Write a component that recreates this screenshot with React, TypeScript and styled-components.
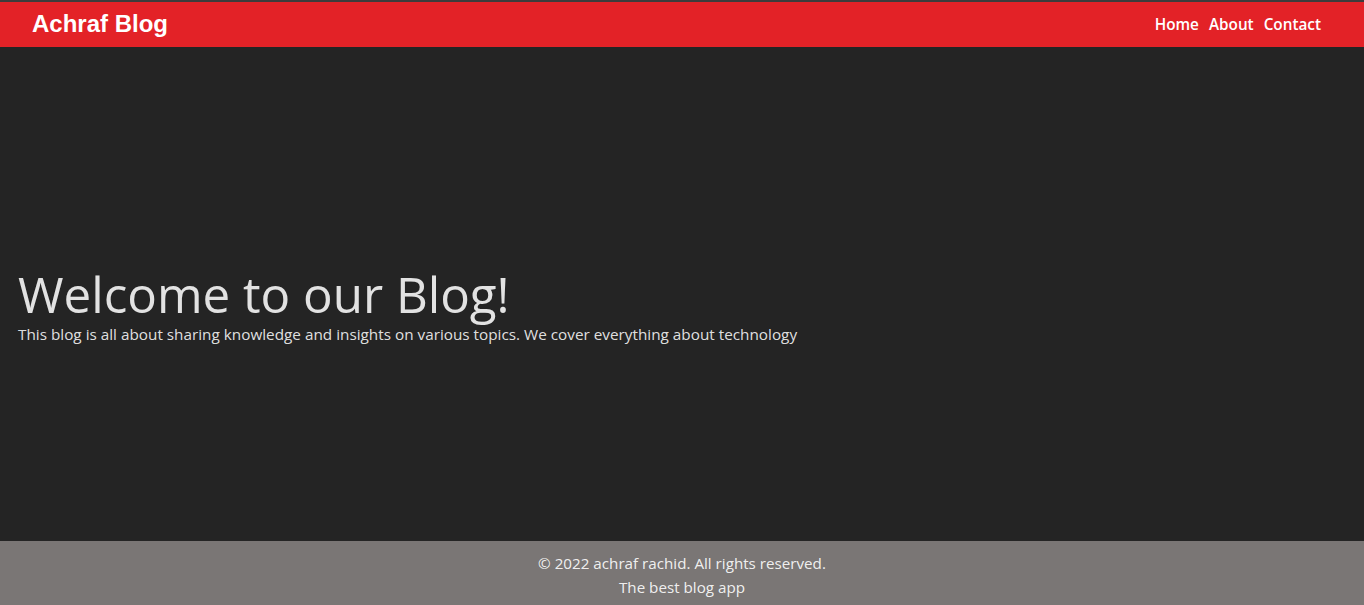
import React from "react";
import styled, { createGlobalStyle } from "styled-components";

const Global = createGlobalStyle`
  html, body { margin: 0; padding: 0; }
  body {
    background: #242424;
    color: rgba(255,255,255,0.87);
    font-family: "Open Sans", "Noto Sans", sans-serif;
  }
`;

const Page = styled.div`
  display: flex;
  flex-direction: column;
  height: 605px;
  border-top: 2px solid #3c3c3c;
  box-sizing: border-box;
`;

const Header = styled.header`
  display: flex;
  align-items: center;
  justify-content: space-between;
  height: 45px;
  padding: 0 43px 2px 32px;
  box-sizing: border-box;
  background: #e32227;
  flex-shrink: 0;
`;

const Logo = styled.div`
  font-family: "Liberation Sans", Arial, sans-serif;
  font-weight: 700;
  font-size: 24px;
  color: #fff;
`;

const Nav = styled.nav`
  display: flex;
  gap: 10px;
`;

const NavLink = styled.a`
  font-family: "Open Sans", sans-serif;
  font-weight: 600;
  font-size: 15.3px;
  color: #fff;
  text-decoration: none;
`;

const Main = styled.main`
  flex: 1;
  display: flex;
  flex-direction: column;
  justify-content: center;
  padding: 22px 18px 0;
`;

const Title = styled.h1`
  margin: 0;
  font-weight: 400;
  font-size: 49.3px;
  line-height: 56px;
  color: rgba(255,255,255,0.87);
`;

const Lead = styled.p`
  margin: 2px 0 0;
  font-size: 15.3px;
  line-height: 20px;
  color: rgba(255,255,255,0.87);
`;

const Footer = styled.footer`
  flex-shrink: 0;
  height: 64px;
  box-sizing: border-box;
  padding-top: 10px;
  background: #7a7675;
  text-align: center;
  color: rgba(255,255,255,0.9);
  font-size: 15.2px;
  line-height: 24px;
`;

const FooterLine = styled.div``;

export default function App() {
  return (
    <>
      <Global />
      <Page>
        <Header>
          <Logo>Achraf Blog</Logo>
          <Nav>
            <NavLink href="#">Home</NavLink>
            <NavLink href="#">About</NavLink>
            <NavLink href="#">Contact</NavLink>
          </Nav>
        </Header>
        <Main>
          <Title>Welcome to our Blog!</Title>
          <Lead>This blog is all about sharing knowledge and insights on various topics. We cover everything about technology</Lead>
        </Main>
        <Footer>
          <FooterLine>© 2022 achraf rachid. All rights reserved.</FooterLine>
          <FooterLine>The best blog app</FooterLine>
        </Footer>
      </Page>
    </>
  );
}
